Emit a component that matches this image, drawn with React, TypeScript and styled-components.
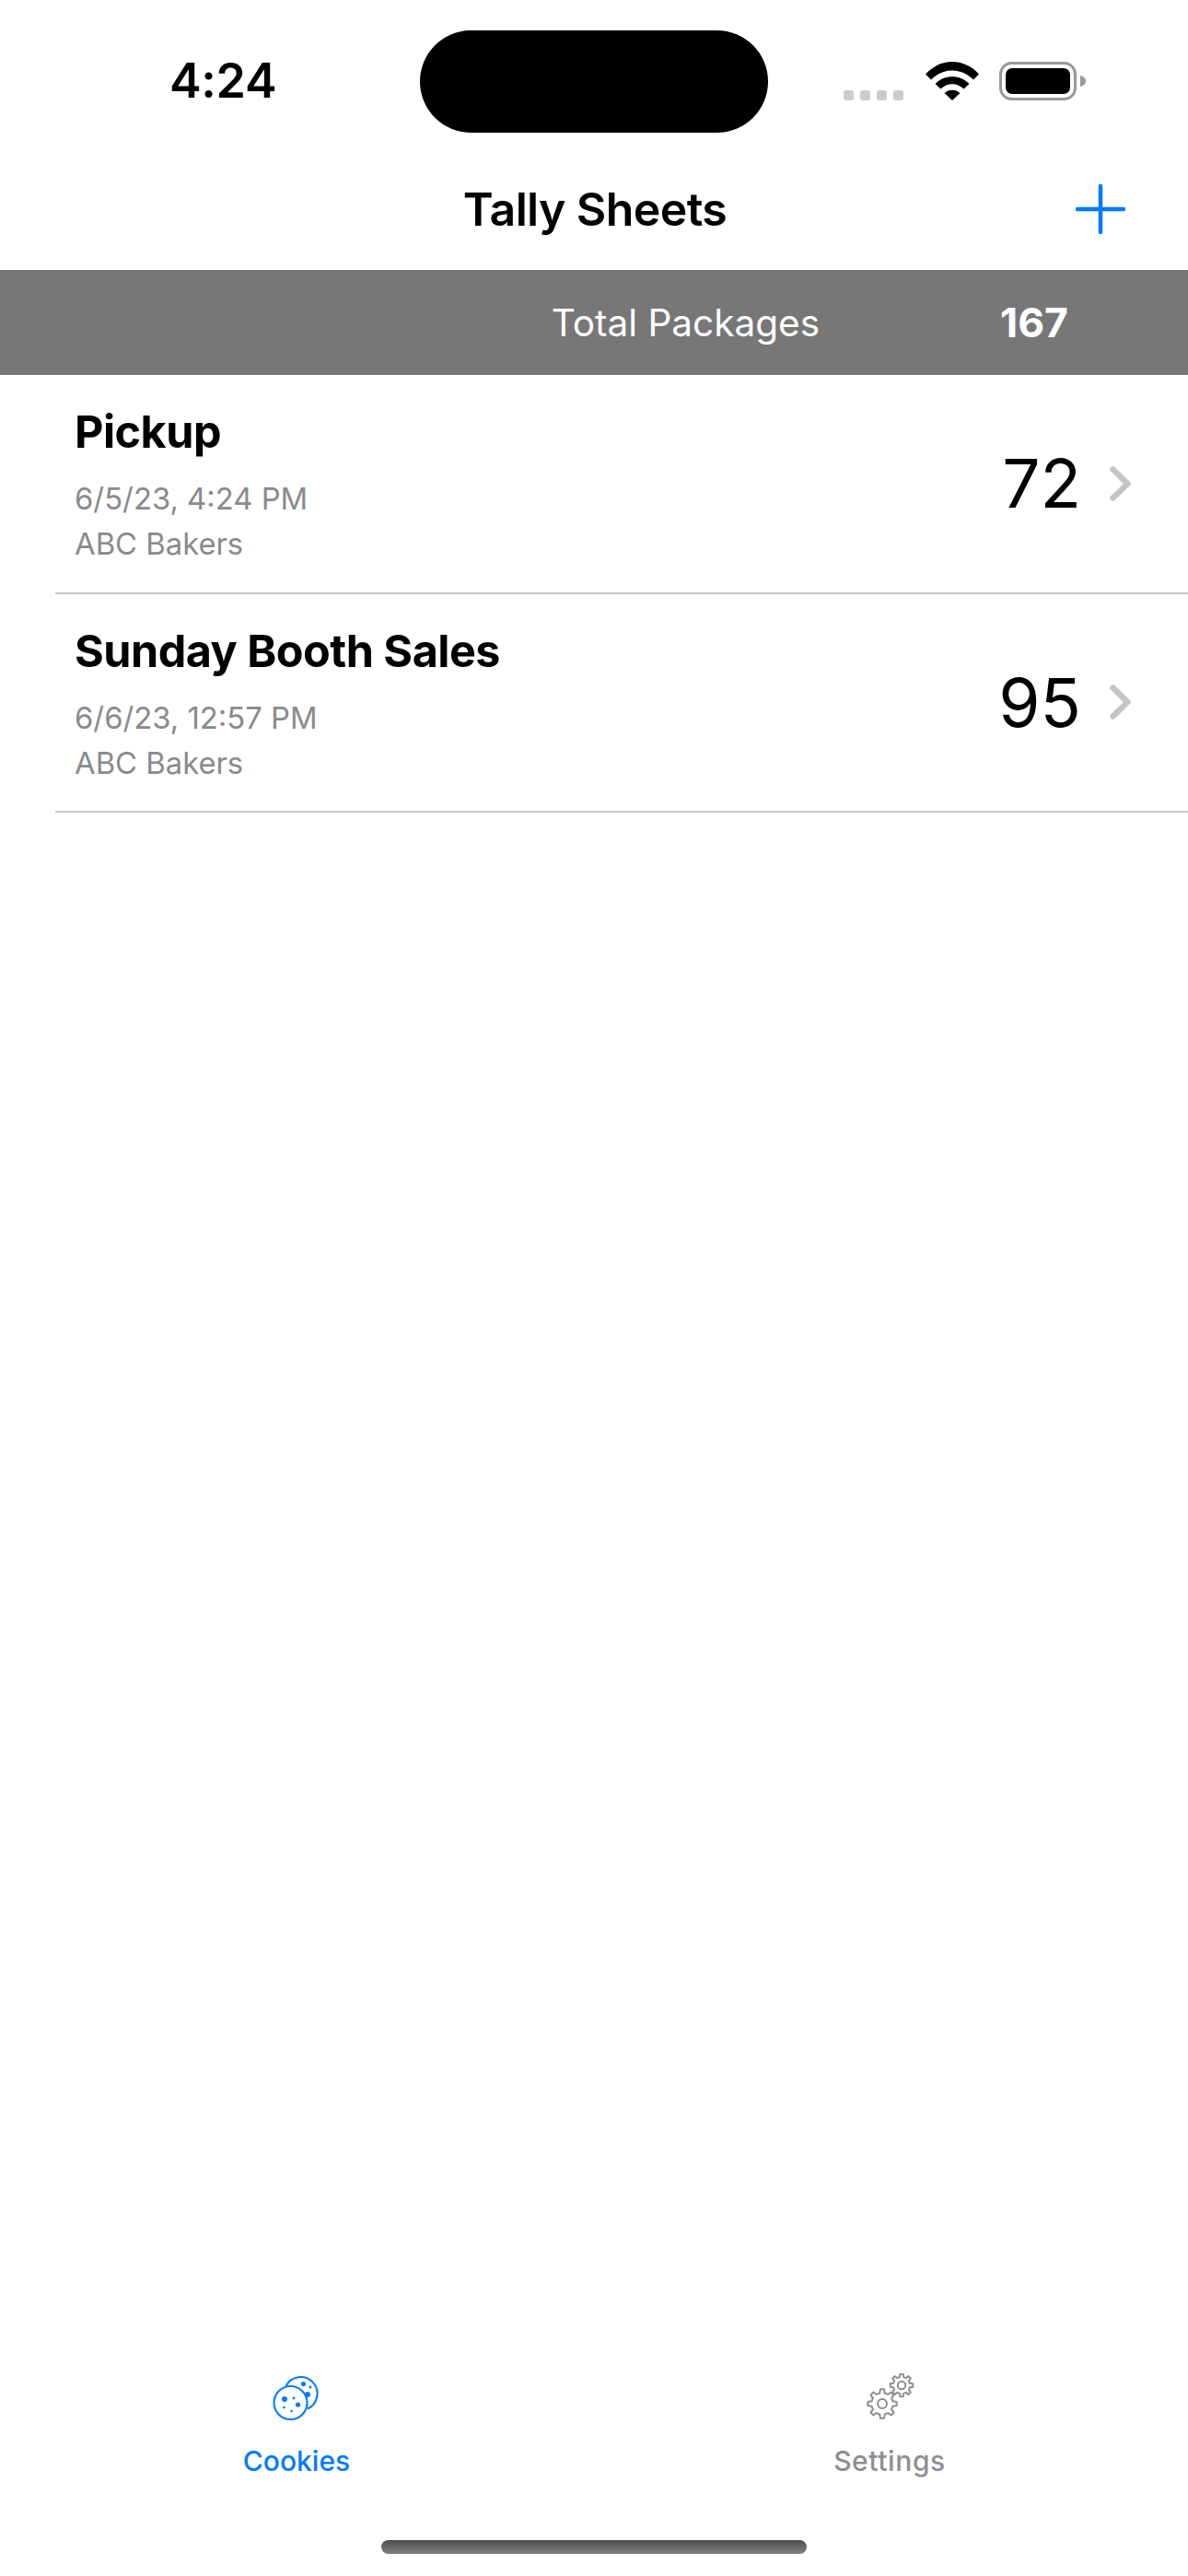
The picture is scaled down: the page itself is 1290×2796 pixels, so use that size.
import React from 'react';
import styled, { createGlobalStyle } from 'styled-components';

const GlobalStyle = createGlobalStyle`
    html, body {
        margin: 0;
        padding: 0;
        background: #fff;
    }
    body {
        font-family: Inter, "Liberation Sans", sans-serif;
        color: #000;
    }
`;

const Page = styled.div`
    width: 1290px;
    height: 2796px;
    display: flex;
    flex-direction: column;
    background: #fff;
    overflow: hidden;
`;

const StatusBar = styled.div`
    height: 137px;
    padding-top: 33px;
    display: grid;
    grid-template-columns: 456px 378px 1fr;
    align-items: start;
`;

const Time = styled.div`
    height: 109px;
    padding-left: 184px;
    display: flex;
    align-items: center;
    font-size: 52px;
    font-weight: 600;
    letter-spacing: -0.3px;
`;

const Island = styled.div`
    height: 111px;
    border-radius: 56px;
    background: #000;
`;

const StatusIcons = styled.div`
    height: 109px;
    padding-left: 82px;
    display: flex;
    align-items: center;
`;

const NavBar = styled.div`
    height: 123px;
    display: grid;
    grid-template-columns: 1fr auto 1fr;
    align-items: center;
`;

const NavTitle = styled.div`
    grid-column: 2;
    font-size: 50px;
    font-weight: 600;
    letter-spacing: -0.6px;
    margin-left: 2px;
    margin-top: -10px;
`;

const AddButton = styled.div`
    grid-column: 3;
    justify-self: end;
    margin-right: 68px;
    margin-top: -9px;
    display: flex;
`;

const TotalBanner = styled.div`
    height: 114px;
    background: #777777;
    color: #fff;
    display: flex;
    align-items: center;
    justify-content: flex-end;
    padding-right: 130px;
`;

const TotalLabel = styled.div`
    font-size: 40.5px;
    margin-right: 196px;
`;

const TotalValue = styled.div`
    font-size: 44.5px;
    font-weight: 700;
`;

const List = styled.div`
    display: flex;
    flex-direction: column;
`;

const Row = styled.div`
    height: 237.5px;
    margin-left: 60px;
    padding: 0 62px 0 21px;
    box-sizing: border-box;
    border-bottom: 2px solid #c8c8ca;
    display: flex;
    align-items: center;
`;

const RowText = styled.div`
    flex: 1;
    margin-top: 4px;
    display: flex;
    flex-direction: column;
`;

const RowTitle = styled.div`
    font-size: 48.5px;
    font-weight: 700;
    line-height: 62px;
    letter-spacing: -0.5px;
    margin-bottom: 17px;
`;

const RowMeta = styled.div`
    font-size: 32.8px;
    line-height: 49px;
    color: #8a8a8e;
`;

const RowCount = styled.div`
    font-size: 73px;
    font-weight: 400;
    margin-right: 31px;
`;

const TabBar = styled.div`
    margin-top: auto;
    display: flex;
    flex-direction: column;
    align-items: center;
`;

const Tabs = styled.div`
    width: 100%;
    display: grid;
    grid-template-columns: 644px 644px;
`;

const Tab = styled.div<{ $active?: boolean }>`
    display: flex;
    flex-direction: column;
    align-items: center;
    color: ${p => (p.$active ? '#007aff' : '#8e8e93')};
`;

const TabLabel = styled.div<{ $wide?: boolean }>`
    margin-top: 24px;
    font-size: 30px;
    font-weight: 500;
    line-height: 38px;
    letter-spacing: ${p => (p.$wide ? '0.6px' : '0')};
`;

const HomeIndicator = styled.div`
    width: 462px;
    height: 15px;
    margin: 67px 0 24px;
    border-radius: 8px;
    background: linear-gradient(#4e4e4e, #808080);
`;

const Signal = () => (
    <svg width="66" height="42" viewBox="0 0 66 42" style={{ display: 'block' }}>
        {[0, 18, 36, 54].map(x => (
            <rect key={x} x={x} y="31" width="11" height="11" rx="3" fill="#cccccc" />
        ))}
    </svg>
);

const Wifi = () => (
    <svg width="58" height="42" viewBox="0 0 58 42" style={{ display: 'block', marginLeft: 23 }}>
        <path d="M0 13.5 C16 -4.5 42 -4.5 58 13.5 L52 19.5 C39 6 19 6 6 19.5 Z" fill="#000" />
        <path d="M10.5 24 C20 13.5 38 13.5 47.5 24 L41.5 29.5 C34 22.5 24 22.5 16.5 29.5 Z" fill="#000" />
        <path d="M20.5 34 C25 29.5 33 29.5 37.5 34 L29 42 Z" fill="#000" />
    </svg>
);

const Battery = () => (
    <svg width="94" height="42" viewBox="0 0 94 42" style={{ display: 'block', marginLeft: 22 }}>
        <rect x="1.5" y="1.5" width="81" height="39" rx="12" fill="none" stroke="#999999" strokeWidth="3" />
        <rect x="7" y="7" width="70" height="28" rx="7" fill="#000" />
        <path d="M88 15 C92 16 94 18 94 21 C94 24 92 26 88 27 Z" fill="#999999" />
    </svg>
);

const Plus = () => (
    <svg width="54" height="54" viewBox="0 0 54 54" style={{ display: 'block' }}>
        <path d="M27 2 L27 52 M2 27 L52 27" stroke="#007aff" strokeWidth="4.5" strokeLinecap="round" />
    </svg>
);

const Chevron = () => (
    <svg width="23" height="38" viewBox="0 0 23 38" style={{ display: 'block' }}>
        <path d="M3.5 3.5 L19.5 19 L3.5 34.5" fill="none" stroke="#c5c5c7" strokeWidth="6.5" strokeLinecap="round" strokeLinejoin="round" />
    </svg>
);

const CookiesIcon = () => (
    <svg width="52" height="52" viewBox="0 0 52 52" style={{ display: 'block' }} fill="#007aff">
        <path d="M14.5 14 A18 18 0 1 1 38 38.5" fill="none" stroke="#007aff" strokeWidth="2.1" />
        <circle cx="33.5" cy="11.5" r="2.6" />
        <circle cx="41" cy="15" r="1.4" />
        <circle cx="38" cy="23" r="3" />
        <circle cx="19.5" cy="32" r="18" fill="#fff" stroke="#007aff" strokeWidth="2.1" />
        <circle cx="13" cy="28" r="3" />
        <circle cx="23" cy="27" r="1.4" />
        <circle cx="27.5" cy="34" r="2.6" />
        <circle cx="12.5" cy="37" r="1.3" />
        <circle cx="20.5" cy="41" r="1.3" />
    </svg>
);

// builds the outline of a cog with rounded-ish teeth
const gearPath = (cx: number, cy: number, outer: number, inner: number, teeth: number) => {
    const pts: string[] = [];
    const step = (Math.PI * 2) / teeth;
    for (let i = 0; i < teeth; i++) {
        const a = i * step - Math.PI / 2;
        const corners: [number, number][] = [
            [inner, a - step * 0.3],
            [outer, a - step * 0.17],
            [outer, a + step * 0.17],
            [inner, a + step * 0.3],
        ];
        corners.forEach(([r, t]) => {
            pts.push(`${(cx + r * Math.cos(t)).toFixed(2)} ${(cy + r * Math.sin(t)).toFixed(2)}`);
        });
    }
    return `M${pts.join(' L')} Z`;
};

const SettingsIcon = () => (
    <svg width="52" height="52" viewBox="0 0 52 52" style={{ display: 'block', marginLeft: 2 }} fill="none" stroke="#8e8e93" strokeWidth="2" strokeLinejoin="round">
        <path d={gearPath(38, 13, 12.4, 9.2, 8)} />
        <circle cx="38" cy="13" r="4.2" />
        <path d={gearPath(17, 33, 15.8, 11.8, 8)} fill="#fff" />
        <circle cx="17" cy="33" r="5" />
    </svg>
);

const sheets = [
    { id: 1, title: 'Pickup', date: '6/5/23, 4:24 PM', baker: 'ABC Bakers', count: 72 },
    { id: 2, title: 'Sunday Booth Sales', date: '6/6/23, 12:57 PM', baker: 'ABC Bakers', count: 95 },
];

const App: React.FC = () => {
    return (
        <Page>
            <GlobalStyle />
            <StatusBar>
                <Time>4:24</Time>
                <Island />
                <StatusIcons>
                    <Signal />
                    <Wifi />
                    <Battery />
                </StatusIcons>
            </StatusBar>
            <NavBar>
                <NavTitle>Tally Sheets</NavTitle>
                <AddButton><Plus /></AddButton>
            </NavBar>
            <TotalBanner>
                <TotalLabel>Total Packages</TotalLabel>
                <TotalValue>167</TotalValue>
            </TotalBanner>
            <List>
                {sheets.map(s => (
                    <Row key={s.id}>
                        <RowText>
                            <RowTitle>{s.title}</RowTitle>
                            <RowMeta>{s.date}</RowMeta>
                            <RowMeta>{s.baker}</RowMeta>
                        </RowText>
                        <RowCount>{s.count}</RowCount>
                        <Chevron />
                    </Row>
                ))}
            </List>
            <TabBar>
                <Tabs>
                    <Tab $active>
                        <CookiesIcon />
                        <TabLabel>Cookies</TabLabel>
                    </Tab>
                    <Tab>
                        <SettingsIcon />
                        <TabLabel $wide>Settings</TabLabel>
                    </Tab>
                </Tabs>
                <HomeIndicator />
            </TabBar>
        </Page>
    );
};

export default App;
